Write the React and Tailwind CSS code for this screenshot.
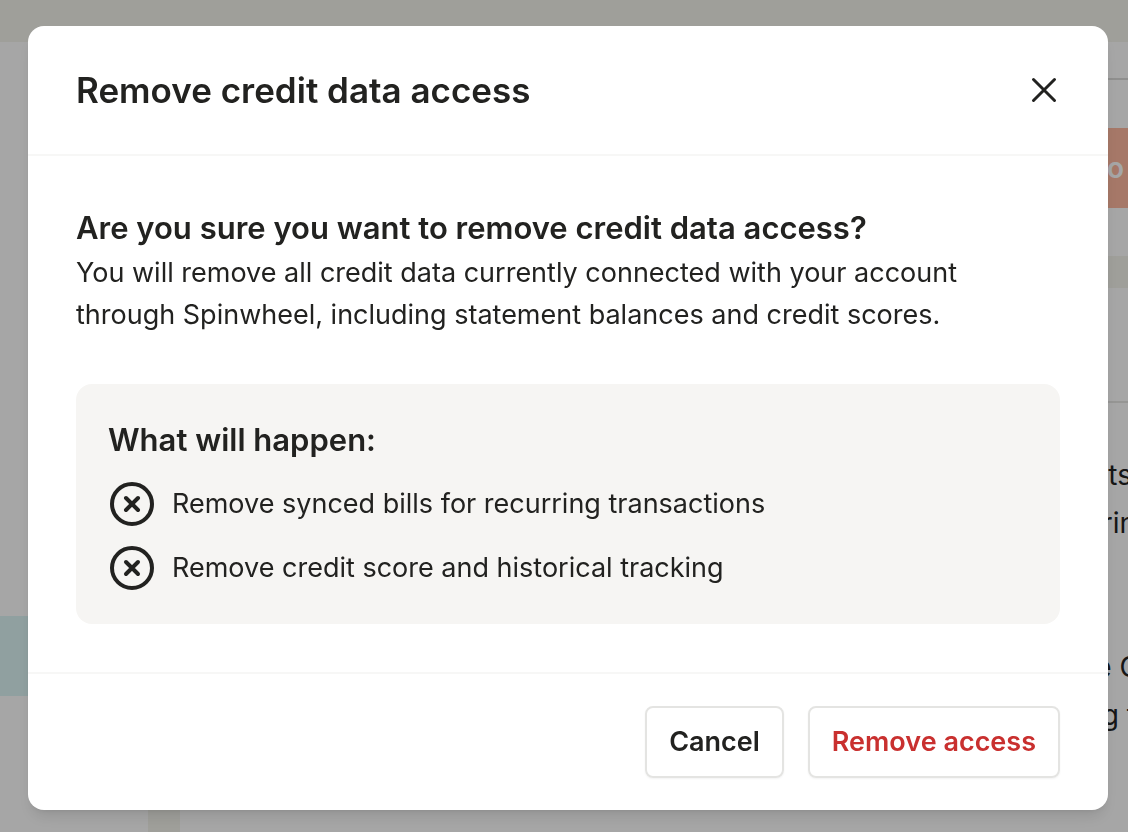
import React from 'react';

const consequences = [
  'Remove synced bills for recurring transactions',
  'Remove credit score and historical tracking',
];

const CloseIcon = () => (
  <svg viewBox="0 0 32 32" className="w-8 h-8" fill="none" stroke="currentColor" strokeWidth="3" strokeLinecap="round">
    <path d="M5.5 5.5 26.5 26.5M26.5 5.5 5.5 26.5" />
  </svg>
);

const CircleXIcon = () => (
  <svg viewBox="0 0 48 48" className="w-12 h-12 shrink-0" fill="none" stroke="currentColor" strokeWidth="4" strokeLinecap="round">
    <circle cx="24" cy="24" r="20" />
    <path d="M18 18 30 30M30 18 18 30" />
  </svg>
);

/* the settings page that stays behind the dialog */
const PageBehind = () => (
  <div className="min-h-screen flex flex-col bg-[#f4f4ed]" aria-hidden="true">
    <div className="h-[42px]" />
    <div className="flex-1 flex gap-8">
      <aside className="w-[148px] bg-white flex flex-col">
        <div className="mt-[574px] h-20 bg-[#ddf6f6]" />
      </aside>
      <main className="flex-1 flex flex-col gap-8 text-[28px] text-[#222]">
        <section className="h-[214px] bg-white pt-9">
          <div className="border-t-2 border-[#dcdcda] pt-12 flex justify-end">
            <div className="w-60 h-20 bg-[#ffb9a0] flex items-center justify-end pr-1 font-semibold text-white">o</div>
          </div>
        </section>
        <section className="flex-1 bg-white pt-[113px]">
          <div className="border-t-2 border-[#e6e6e4] pt-12 text-right leading-[48px]">
            <p className="-mr-1">ts</p>
            <p className="-mr-2">rin</p>
            <p className="mt-24 -mr-3">e C</p>
            <p className="-mr-2">g t</p>
          </div>
        </section>
      </main>
    </div>
  </div>
);

export default function App() {
  return (
    <div className="relative overflow-hidden font-['Inter',sans-serif] text-[#222220]">
      <PageBehind />

      <div className="fixed inset-0 bg-black/35 pl-7 pr-5 pt-[26px]">
        <div role="dialog" aria-modal="true" aria-labelledby="dialog-title" className="bg-white rounded-2xl shadow-lg">
          <header className="flex items-center justify-between px-12 py-10 border-b-2 border-[#f7f7f6]">
            <h1 id="dialog-title" className="text-[35px] leading-[48px] font-semibold">
              Remove credit data access
            </h1>
            <button type="button" aria-label="Close">
              <CloseIcon />
            </button>
          </header>

          <div className="p-12">
            <h2 className="text-[31px] leading-[48px] font-[560]">
              Are you sure you want to remove credit data access?
            </h2>
            <p className="text-[27px] leading-[42px]">
              You will remove all credit data currently connected with your account through Spinwheel,
              including statement balances and credit scores.
            </p>

            <div className="mt-12 p-8 rounded-2xl bg-[#f6f5f3]">
              <h3 className="text-[31px] leading-[48px] font-[560]">What will happen:</h3>
              <ul className="mt-4 flex flex-col gap-4">
                {consequences.map((text) => (
                  <li key={text} className="flex items-center gap-4 text-[27px] leading-[48px]">
                    <CircleXIcon />
                    {text}
                  </li>
                ))}
              </ul>
            </div>
          </div>

          <footer className="flex justify-end gap-6 px-12 py-8 border-t-2 border-[#f7f7f6] text-[27px] leading-[40px] font-semibold">
            <button type="button" className="px-[22px] py-[14px] border-2 border-[#e4e4e2] rounded-lg shadow-xs">
              Cancel
            </button>
            <button type="button" className="px-[22px] py-[14px] border-2 border-[#e4e4e2] rounded-lg shadow-xs text-[#c9302f]">
              Remove access
            </button>
          </footer>
        </div>
      </div>
    </div>
  );
}
